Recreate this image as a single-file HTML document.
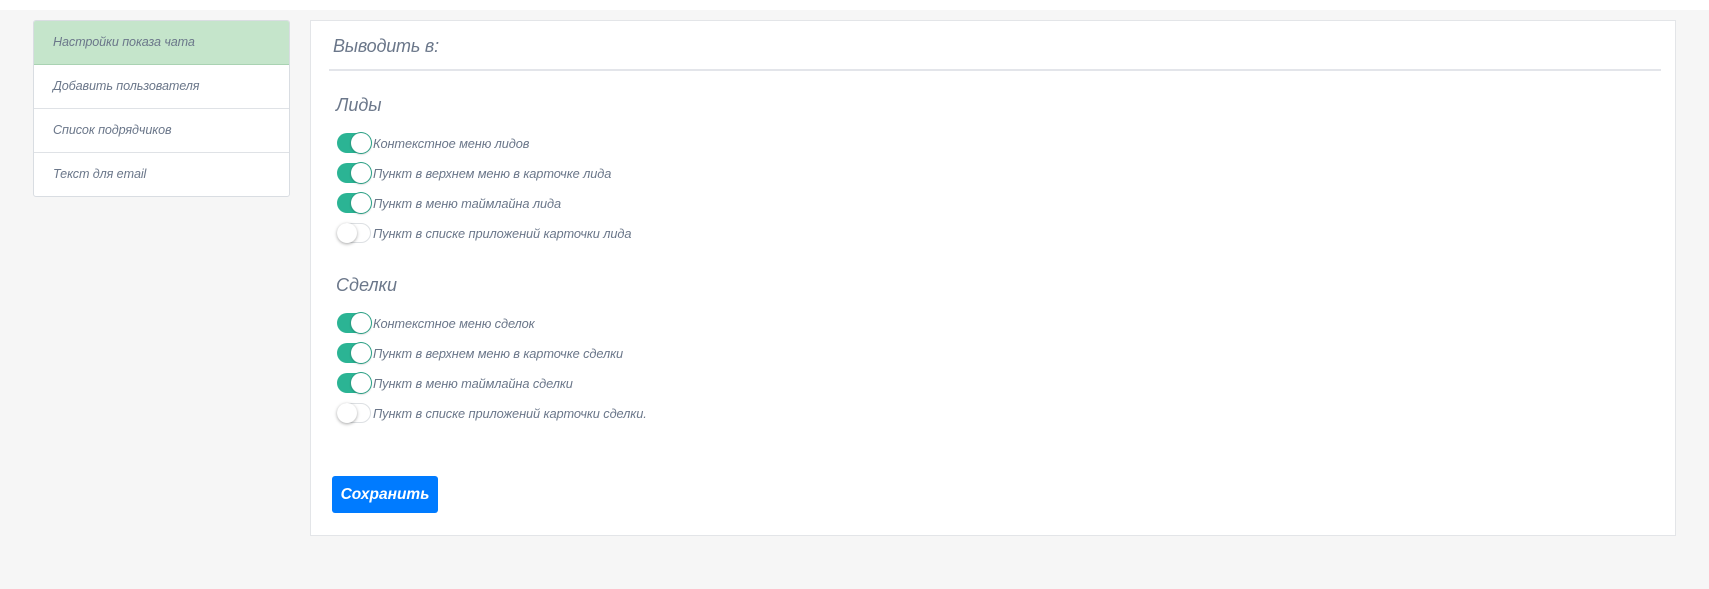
<!DOCTYPE html>
<html><head><meta charset="utf-8"><style>
*{box-sizing:border-box;margin:0;padding:0}
body{width:1709px;height:589px;background:#f6f6f6;font-family:"Liberation Sans",sans-serif;font-style:italic;color:#6b778a;position:relative;overflow:hidden}
.top{position:absolute;left:0;top:0;width:1709px;height:10px;background:#fff}
.side{position:absolute;left:33px;top:20px;width:257px;height:177px;background:#fff;border:1px solid #d9dde2;border-radius:3px;overflow:hidden}
.side div{height:44px;line-height:42px;padding-left:19px;font-size:12.6px;letter-spacing:-0.1px;border-bottom:1px solid #dfe2e6}
.side div:last-child{border-bottom:none}
.side .act{background:#c5e5cb;border-bottom:1px solid #a9d2b2}
.main{position:absolute;left:310px;top:20px;width:1366px;height:516px;background:#fff;border:1px solid #e3e5e8}
h2{position:absolute;left:22px;top:15px;font-size:18px;font-weight:normal;letter-spacing:-0.2px}
.sep{position:absolute;left:18px;top:48px;width:1332px;height:2px;background:#e3e5ea}
h3{position:absolute;left:25px;font-size:18px;font-weight:normal}
.row{position:absolute;left:26px;height:22px;display:flex;align-items:center;font-size:12.8px;letter-spacing:-0.1px}
.tg{width:34px;height:20px;border-radius:10px;background:#2bb494;position:relative;margin-right:2px}
.tg::after{content:"";position:absolute;right:0;top:0;width:20px;height:20px;border-radius:50%;background:#fff;box-shadow:0 0 0 1px #2a9f84, 0 1px 2px rgba(0,0,0,.3)}
.tg.off{background:#fff;border:1px solid #dde0e3}
.tg.off::after{left:-1px;top:-1px;right:auto;box-shadow:0 1px 3px rgba(0,0,0,.35)}
.btn{position:absolute;left:21px;top:455px;width:106px;height:37px;background:#007bff;border-radius:3px;color:#fff;font-weight:bold;font-size:15.5px;line-height:37px;text-align:center}
</style></head><body>
<div class="top"></div>
<div class="side">
<div class="act">Настройки показа чата</div>
<div>Добавить пользователя</div>
<div>Список подрядчиков</div>
<div>Текст для email</div>
</div>
<div class="main">
<h2>Выводить в:</h2>
<div class="sep"></div>
<h3 style="top:74px">Лиды</h3>
<div class="row" style="top:111px"><span class="tg"></span>Контекстное меню лидов</div>
<div class="row" style="top:141px"><span class="tg"></span>Пункт в верхнем меню в карточке лида</div>
<div class="row" style="top:171px"><span class="tg"></span>Пункт в меню таймлайна лида</div>
<div class="row" style="top:201px"><span class="tg off"></span>Пункт в списке приложений карточки лида</div>
<h3 style="top:254px">Сделки</h3>
<div class="row" style="top:291px"><span class="tg"></span>Контекстное меню сделок</div>
<div class="row" style="top:321px"><span class="tg"></span>Пункт в верхнем меню в карточке сделки</div>
<div class="row" style="top:351px"><span class="tg"></span>Пункт в меню таймлайна сделки</div>
<div class="row" style="top:381px"><span class="tg off"></span>Пункт в списке приложений карточки сделки.</div>
<div class="btn">Сохранить</div>
</div>
</body></html>
